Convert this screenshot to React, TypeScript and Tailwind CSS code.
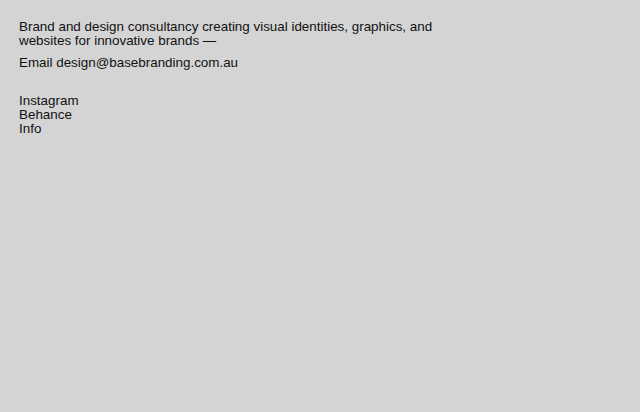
export default function App() {
  return (
    <div
      className="min-h-[412px] w-full bg-[#d4d4d4] px-[19px] pt-[20px] text-[13.4px] leading-[14px] text-[#111111]"
      style={{ fontFamily: '"Liberation Sans", Arial, sans-serif' }}
    >
      <p className="max-w-[440px]">
        Brand and design consultancy creating visual identities, graphics, and websites for innovative brands —
      </p>
      <p className="mt-[8px]">
        Email <a href="mailto:design@basebranding.com.au">design@basebranding.com.au</a>
      </p>
      <ul className="mt-[24px] flex flex-col">
        <li><a href="#">Instagram</a></li>
        <li><a href="#">Behance</a></li>
        <li><a href="#">Info</a></li>
      </ul>
    </div>
  )
}
